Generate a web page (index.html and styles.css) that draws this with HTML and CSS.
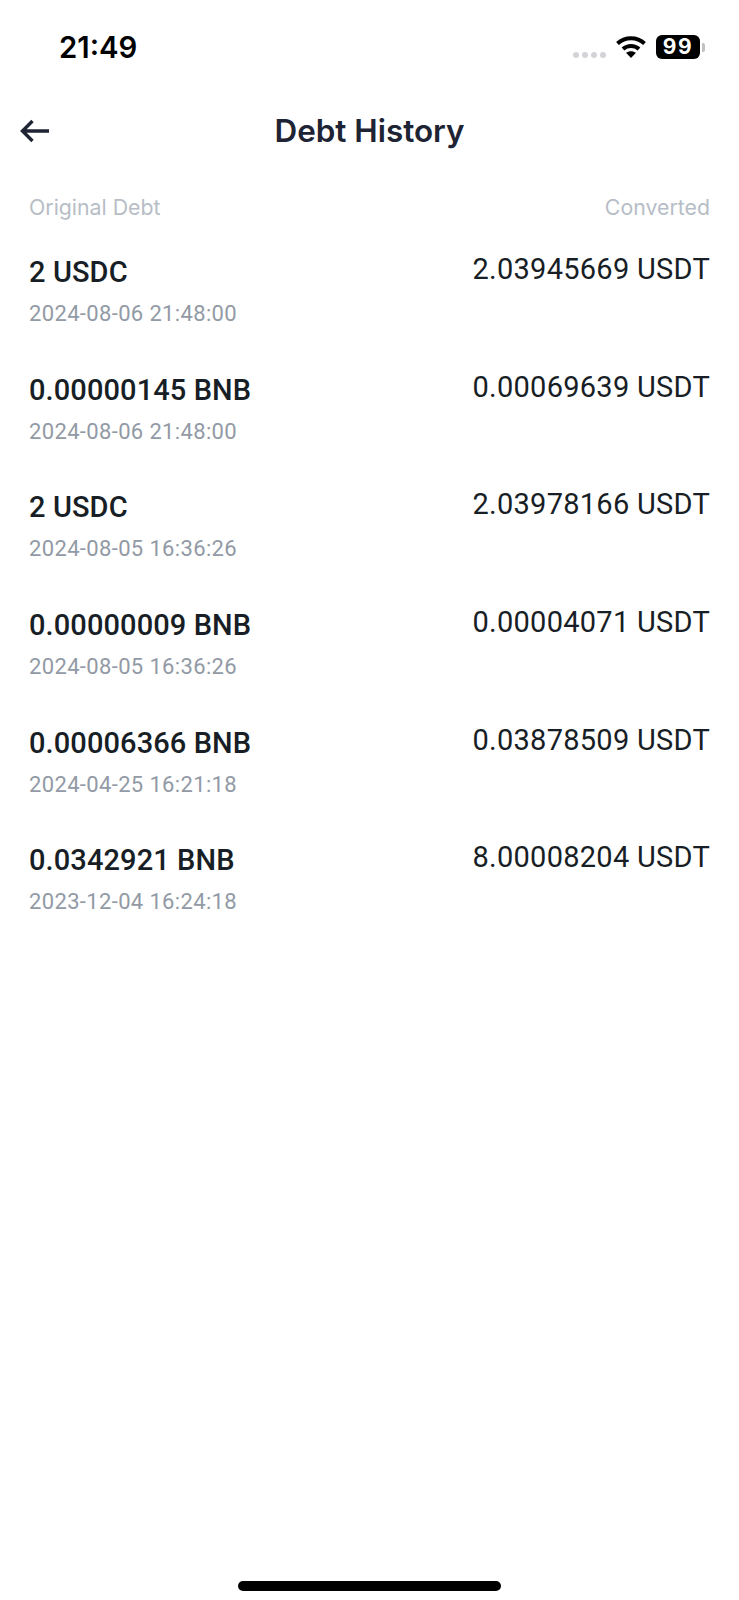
FILE: index.html
```html
<!DOCTYPE html>
<html lang="en">
<head>
    <meta charset="UTF-8">
    <meta name="viewport" content="width=device-width, initial-scale=1.0">
    <title>Debt History</title>
    <link rel="stylesheet" href="styles.css">
</head>
<body>
    <div class="screen">
        <div class="status-bar">
            <span class="clock">21:49</span>
            <div class="status-icons">
                <div class="signal"><i></i><i></i><i></i><i></i></div>
                <svg class="wifi" width="32" height="24" viewBox="0 0 32 24">
                    <path d="M2.5 8.5C10 1.5 22 1.5 29.5 8.5" fill="none" stroke="#000" stroke-width="4"/>
                    <path d="M8 14C12.500 10 19.500 10 24 14" fill="none" stroke="#000" stroke-width="4"/>
                    <path d="M16 23L11 17.800C14 15.600 18 15.600 21 17.800Z" fill="#000"/>
                </svg>
                <div class="battery"><span class="battery-level">99</span><i class="battery-cap"></i></div>
            </div>
        </div>

        <header class="nav">
            <svg class="back" width="32" height="26" viewBox="0 0 32 26">
                <path d="M30 13H4M13.500 3L3.500 13L13.500 23" fill="none" stroke="#1e2433" stroke-width="3.400"/>
            </svg>
            <h1>Debt History</h1>
        </header>

        <div class="columns">
            <span>Original Debt</span>
            <span>Converted</span>
        </div>

        <ul class="debts">
            <li><div><p class="amount">2 USDC</p><p class="date">2024-08-06 21:48:00</p></div><p class="converted">2.03945669 USDT</p></li>
            <li><div><p class="amount">0.00000145 BNB</p><p class="date">2024-08-06 21:48:00</p></div><p class="converted">0.00069639 USDT</p></li>
            <li><div><p class="amount">2 USDC</p><p class="date">2024-08-05 16:36:26</p></div><p class="converted">2.03978166 USDT</p></li>
            <li><div><p class="amount">0.00000009 BNB</p><p class="date">2024-08-05 16:36:26</p></div><p class="converted">0.00004071 USDT</p></li>
            <li><div><p class="amount">0.00006366 BNB</p><p class="date">2024-04-25 16:21:18</p></div><p class="converted">0.03878509 USDT</p></li>
            <li><div><p class="amount">0.0342921 BNB</p><p class="date">2023-12-04 16:24:18</p></div><p class="converted">8.00008204 USDT</p></li>
        </ul>

        <div class="home-bar"></div>
    </div>
</body>
</html>
```

FILE: styles.css
```css
* {
    box-sizing: border-box;
}
body {
    margin: 0;
    background: #fff;
    font-family: Inter, sans-serif;
    color: #1e2433;
}
p, h1, ul {
    margin: 0;
    padding: 0;
}
.screen {
    height: 1600px;
    display: flex;
    flex-direction: column;
}
.status-bar {
    height: 94px;
    display: flex;
    justify-content: space-between;
    align-items: center;
    padding: 0 34px 0 59px;
}
.clock {
    font-size: 29.300px;
    font-weight: 600;
    color: #000;
}
.status-icons {
    display: flex;
    align-items: center;
}
.signal {
    display: flex;
    gap: 3px;
    margin: 15px 9px 0 0;
}
.signal i {
    width: 6px;
    height: 6px;
    border-radius: 50%;
    background: #d3d4d8;
}
.wifi {
    margin-right: 9px;
}
.battery {
    display: flex;
    align-items: center;
}
.battery-level {
    width: 44px;
    height: 24px;
    border-radius: 6px;
    background: #000;
    color: #fff;
    font: 700 21px/24px Inter, sans-serif;
    letter-spacing: 1.500px;
    text-align: center;
}
.battery-cap {
    width: 3px;
    height: 9px;
    margin-left: 2px;
    background: #bfc1c5;
    border-radius: 0 2px 2px 0;
}
.nav {
    height: 74px;
    display: flex;
    align-items: center;
    justify-content: center;
    position: relative;
}
.back {
    position: absolute;
    left: 19px;
    top: 24px;
}
.nav h1 {
    font-size: 31.400px;
    font-weight: 600;
}
.columns {
    display: flex;
    justify-content: space-between;
    padding: 26px 29px 0;
    font-size: 21.300px;
    line-height: 26px;
    color: #b7bdc6;
}
.debts {
    list-style: none;
    margin-top: 32px;
    padding: 0 29px;
}
.debts li {
    height: 117.700px;
    display: flex;
    justify-content: space-between;
}
.amount {
    margin-top: 2px;
    font-family: Roboto, sans-serif;
    font-size: 29px;
    line-height: 36px;
    font-weight: 500;
    letter-spacing: 0.100px;
    color: #181e25;
}
.date {
    margin-top: 11px;
    font-family: Roboto, sans-serif;
    font-size: 22px;
    line-height: 26px;
    letter-spacing: 0.350px;
    color: #929aa5;
}
.converted {
    font-family: Roboto, sans-serif;
    font-size: 29px;
    line-height: 34px;
    letter-spacing: 0.270px;
    color: #181e25;
}
.home-bar {
    width: 263px;
    height: 10px;
    margin: auto auto 9px;
    border-radius: 5px;
    background: #000;
}
```
